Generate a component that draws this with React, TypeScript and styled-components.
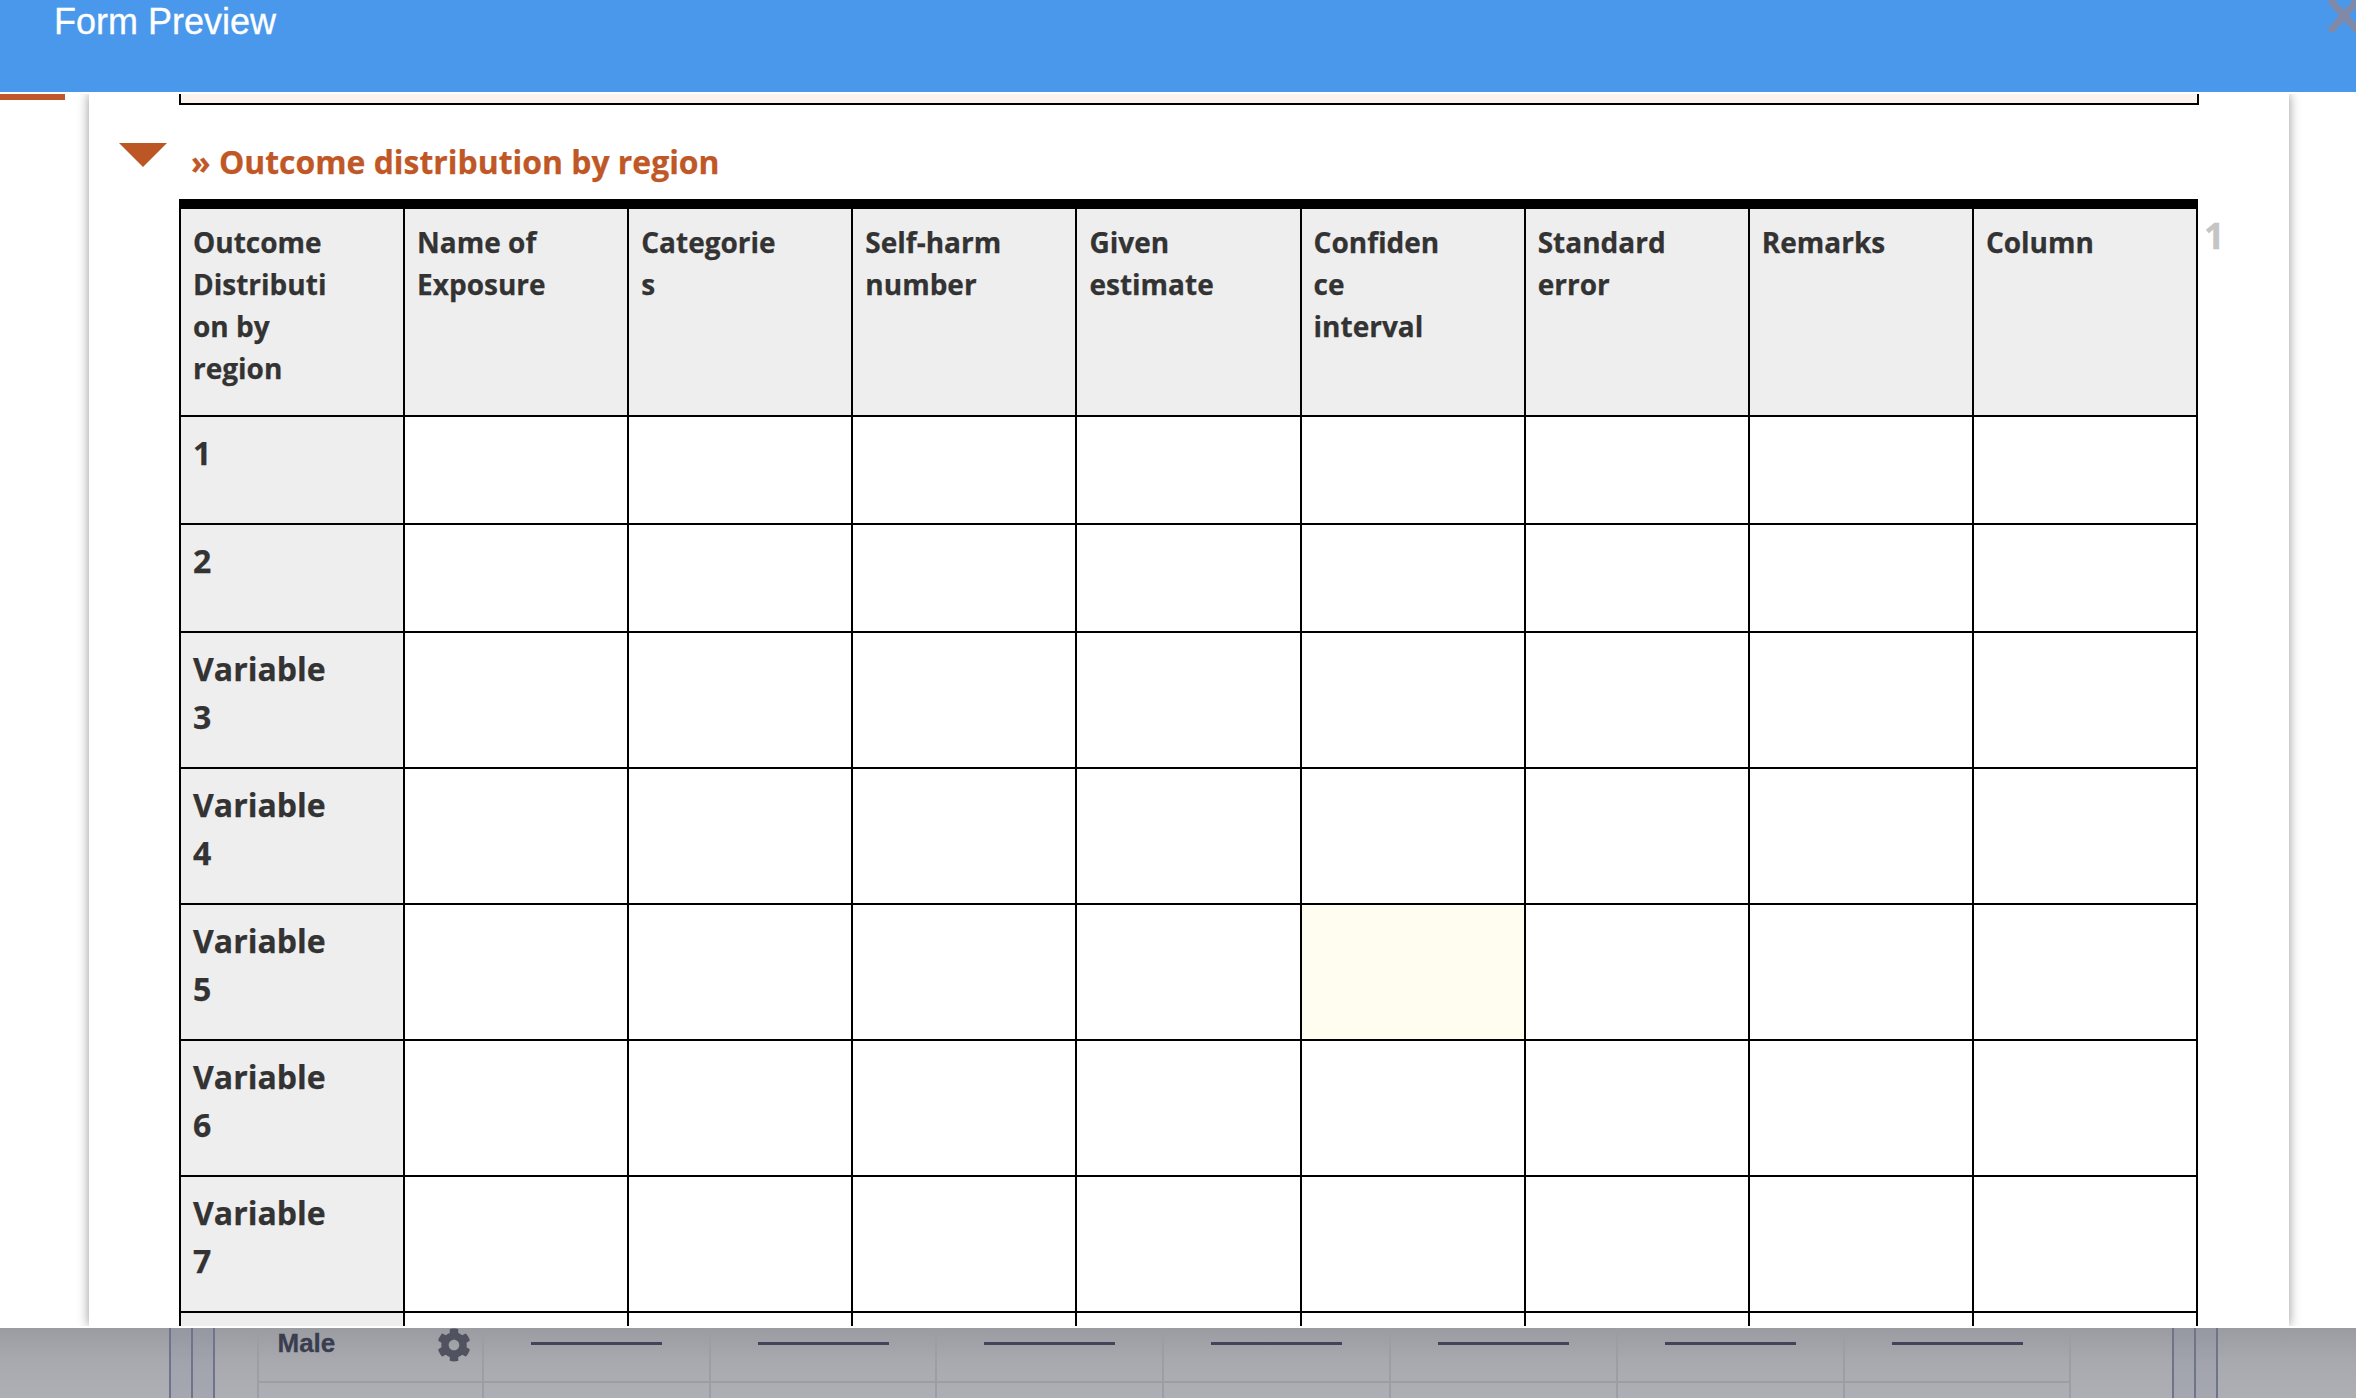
import React from "react";
import styled, { createGlobalStyle } from "styled-components";
import { FaCog } from "react-icons/fa";

const Global = createGlobalStyle`
  html, body { margin: 0; padding: 0; background: #fff; overflow: hidden; }
  * { box-sizing: border-box; }
`;

const Page = styled.div`
  width: 2356px;
  height: 1398px;
  display: flex;
  flex-direction: column;
  overflow: hidden;
  background: #fff;
`;

const Header = styled.header`
  position: relative;
  flex: 0 0 92px;
  padding: 4px 0 0 54px;
  background: #4a98ec;
  overflow: hidden;
`;

const HeaderTitle = styled.h1`
  margin: 0;
  font: 400 36px/36px "Liberation Sans", Arial, sans-serif;
  color: #fff;
  -webkit-text-stroke: 0.3px #fff;
`;

const CloseIcon = styled.svg`
  position: absolute;
  top: 0;
  right: 0;
  width: 32px;
  height: 34px;
`;

const Stage = styled.main`
  flex: 0 0 1236px;
  padding: 2px 0;
  background: #fff;
`;

const StageInner = styled.div`
  display: flex;
  height: 1232px;
  overflow: hidden;
`;

const Gutter = styled.div`
  flex: 0 0 89px;
`;

const AccentBar = styled.div`
  width: 65px;
  height: 6px;
  background: #c0582a;
`;

const Sheet = styled.section`
  flex: 0 0 2200px;
  padding-left: 30px;
  background: #fff;
  box-shadow: 0 0 11px rgba(0, 0, 0, 0.42);
  overflow: hidden;
`;

const PrevTableEnd = styled.div`
  width: 2020px;
  height: 11px;
  margin-left: 60px;
  background: #fdf3ee;
  border: 2px solid #000;
  border-top: 0;
`;

const SectionHead = styled.div`
  display: flex;
  align-items: flex-start;
  gap: 24px;
  height: 61px;
  margin-top: 33px;
`;

const Disclosure = styled.span`
  width: 0;
  height: 0;
  margin-top: 5px;
  border-style: solid;
  border-width: 24px 24px 0;
  border-color: #bc5725 transparent transparent;
`;

const SectionTitle = styled.h2`
  margin: 1px 0 0;
  font: 700 31.9px/45px "Open Sans", sans-serif;
  color: #bf5826;
  white-space: nowrap;
  -webkit-text-stroke: 0.25px #bf5826;
`;

const TableRow = styled.div`
  display: flex;
  align-items: flex-start;
  margin-left: 60px;
`;

const Grid = styled.table`
  flex: 0 0 2019px;
  width: 2019px;
  table-layout: fixed;
  border-collapse: separate;
  border-spacing: 0;
  border-style: solid;
  border-color: #000;
  border-width: 10px 0 0 2px;
`;

const HeadCell = styled.th`
  height: 208px;
  padding: 12px 71px 0 12px;
  vertical-align: top;
  text-align: left;
  font: 700 28px/42px "Open Sans", sans-serif;
  color: #333;
  background: #eee;
  border-right: 2px solid #000;
  border-bottom: 2px solid #000;
  overflow-wrap: break-word;
  -webkit-text-stroke: 0.25px #333;
`;

const RowHead = styled.th<{ $h: number }>`
  height: ${(p) => p.$h}px;
  padding: 12px 71px 0 12px;
  vertical-align: top;
  text-align: left;
  font: 700 32px/48px "Open Sans", sans-serif;
  color: #333;
  background: #eee;
  border-right: 2px solid #000;
  border-bottom: 2px solid #000;
  overflow-wrap: break-word;
  -webkit-text-stroke: 0.25px #333;
`;

const DataCell = styled.td<{ $hl?: boolean }>`
  background: ${(p) => (p.$hl ? "#fffdf0" : "#fff")};
  border-right: 2px solid #000;
  border-bottom: 2px solid #000;
`;

const PageMark = styled.span`
  margin: 12px 0 0 6px;
  font: 700 36px/49px "Open Sans", sans-serif;
  color: #c4c4c4;
  -webkit-text-stroke: 0.3px #c4c4c4;
`;

const Backdrop = styled.footer`
  flex: 1;
  display: flex;
  align-items: stretch;
  padding-left: 169px;
  background: linear-gradient(#9b9ca1 0%, #a9aaaf 50%, #aeafb4 100%);
`;

const Rail = styled.div`
  flex: 0 0 46px;
  border-left: 2px solid #6f748b;
  border-right: 2px solid #6f748b;
  background: linear-gradient(90deg, transparent 20px, #6f748b 20px, #6f748b 22px, transparent 22px), rgba(120, 130, 160, 0.14);
`;

const DimGrid = styled.div`
  flex: 0 0 1815px;
  margin: 0 100px 0 42px;
  display: grid;
  grid-template-columns: repeat(8, 226.8px);
  grid-template-rows: 55px 1fr;
`;

const DimCell = styled.div<{ $first?: boolean; $bottom?: boolean }>`
  display: flex;
  align-items: flex-start;
  border-right: 2px solid #9d9ea5;
  border-left: ${(p) => (p.$first ? "2px solid #9d9ea5" : "0")};
  border-bottom: ${(p) => (p.$bottom ? "0" : "2px solid #9d9ea5")};
`;

const MaleLabel = styled.span`
  margin: 0 0 0 18.5px;
  width: 159px;
  font: 700 26px/30px "Liberation Sans", Arial, sans-serif;
  color: #3a3d50;
  -webkit-text-stroke: 0.3px #3a3d50;
`;

const GearIcon = styled(FaCog)`
  width: 34px;
  height: 34px;
  color: #50525f;
`;

const Blank = styled.div`
  width: 131px;
  height: 3px;
  margin: 14px 0 0 47px;
  background: #41445a;
`;

const columns = [
  "Outcome Distribution by region",
  "Name of Exposure",
  "Categories",
  "Self-harm number",
  "Given estimate",
  "Confidence interval",
  "Standard error",
  "Remarks",
  "Column",
];

const rows: { label: string; h: number }[] = [
  { label: "1", h: 108 },
  { label: "2", h: 108 },
  { label: "Variable 3", h: 136 },
  { label: "Variable 4", h: 136 },
  { label: "Variable 5", h: 136 },
  { label: "Variable 6", h: 136 },
  { label: "Variable 7", h: 136 },
  { label: "", h: 136 },
];

export default function App() {
  return (
    <Page>
      <Global />
      <Header>
        <HeaderTitle>Form Preview</HeaderTitle>
        <CloseIcon viewBox="0 0 32 34">
          <path d="M8 2 L32 29 M8 29 L32 2" stroke="#8289a6" strokeWidth="7" strokeLinecap="round" fill="none" />
        </CloseIcon>
      </Header>
      <Stage>
        <StageInner>
          <Gutter>
            <AccentBar />
          </Gutter>
          <Sheet>
            <PrevTableEnd />
            <SectionHead>
              <Disclosure />
              <SectionTitle>» Outcome distribution by region</SectionTitle>
            </SectionHead>
            <TableRow>
              <Grid>
                <thead>
                  <tr>
                    {columns.map((c) => (
                      <HeadCell key={c}>{c}</HeadCell>
                    ))}
                  </tr>
                </thead>
                <tbody>
                  {rows.map((r, ri) => (
                    <tr key={ri}>
                      <RowHead $h={r.h}>{r.label}</RowHead>
                      {columns.slice(1).map((c, ci) => (
                        <DataCell key={c} $hl={ri === 4 && ci === 4} />
                      ))}
                    </tr>
                  ))}
                </tbody>
              </Grid>
              <PageMark>1</PageMark>
            </TableRow>
          </Sheet>
        </StageInner>
      </Stage>
      <Backdrop>
        <Rail />
        <DimGrid>
          {Array.from({ length: 8 }).map((_, i) => (
            <DimCell key={i} $first={i === 0}>
              {i === 0 ? (
                <>
                  <MaleLabel>Male</MaleLabel>
                  <GearIcon />
                </>
              ) : (
                <Blank />
              )}
            </DimCell>
          ))}
          {Array.from({ length: 8 }).map((_, i) => (
            <DimCell key={i} $first={i === 0} $bottom />
          ))}
        </DimGrid>
        <Rail />
      </Backdrop>
    </Page>
  );
}
